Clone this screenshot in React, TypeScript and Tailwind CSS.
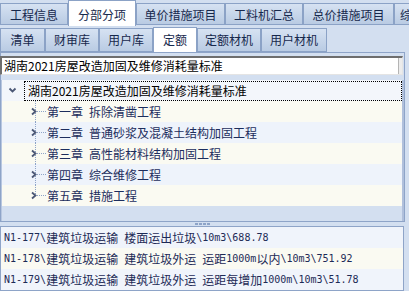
import React from "react";

const FONT = "font-['Noto_Sans_CJK_SC',sans-serif]";

function Mixed({ text }: { text: string }) {
  const parts = text.match(/[\x00-\x7f]+|[^\x00-\x7f]+/g) || [];
  return (
    <>
      {parts.map((p, i) =>
        /^[\x00-\x7f]+$/.test(p) ? (
          <span key={i} className="font-['DejaVu_Sans_Mono',monospace] text-[10px] whitespace-pre">
            {p}
          </span>
        ) : (
          <span key={i} className="text-[12px]">
            {p}
          </span>
        )
      )}
    </>
  );
}

function Tab({ label, w, active, h }: { label: string; w: string; active?: boolean; h: "top" | "sub" }) {
  if (h === "top") {
    return active ? (
      <div className={`${w} h-[26px] shrink-0 bg-white border border-b-0 border-[#8ba2c6] flex items-center justify-center pt-[2px] text-[12px] text-[#16284c]`}>
        {label}
      </div>
    ) : (
      <div className={`${w} mt-[3px] h-[22px] shrink-0 bg-gradient-to-b from-[#d6e2f2] to-[#b9cbe3] border border-[#8ba2c6] flex items-center justify-center pt-[1px] text-[12px] text-[#16284c] whitespace-nowrap overflow-hidden`}>
        {label}
      </div>
    );
  }
  return active ? (
    <div className={`${w} mt-[1px] h-[25px] shrink-0 bg-white border border-b-0 border-[#8ba2c6] flex items-center justify-center text-[12px] text-[#16284c]`}>
      {label}
    </div>
  ) : (
    <div className={`${w} mt-[2px] h-[24px] shrink-0 bg-gradient-to-b from-[#d6e2f2] to-[#b9cbe3] border border-[#8ba2c6] flex items-center justify-center text-[12px] text-[#16284c] whitespace-nowrap`}>
      {label}
    </div>
  );
}

function ChildRow({ num, label, alt, last }: { num: string; label: string; alt: boolean; last?: boolean }) {
  return (
    <div className={`h-[21px] flex items-center ${alt ? "bg-[#eef3fb]" : "bg-[#fafaf2]"}`}>
      <svg width="45" height="21" className="shrink-0">
        <line x1="33.5" y1="0" x2="33.5" y2={last ? 10 : 21} stroke="#8ea4c8" strokeDasharray="1 1" />
        <line x1="35" y1="10.5" x2="44" y2="10.5" stroke="#8ea4c8" strokeDasharray="1 1" />
        <path d="M30 7.5 L33.5 10.5 L30 13.5" stroke="#4b5775" strokeWidth="1.8" fill="none" />
      </svg>
      <span className="text-[12px] text-[#1c2d5d] whitespace-nowrap">{num}</span>
      <span className="ml-[6px] text-[12px] text-[#1c2d5d] whitespace-nowrap">{label}</span>
    </div>
  );
}

function ListRow({ text, alt }: { text: string; alt: boolean }) {
  return (
    <div className={`h-[21px] flex items-center pl-[3px] whitespace-nowrap text-[#1d2a56] ${alt ? "bg-[#fafaf2]" : "bg-[#f0f4fb]"}`}>
      <Mixed text={text} />
    </div>
  );
}

export default function App() {
  const chapters: [string, string][] = [
    ["第一章", "拆除清凿工程"],
    ["第二章", "普通砂浆及混凝土结构加固工程"],
    ["第三章", "高性能材料结构加固工程"],
    ["第四章", "综合维修工程"],
    ["第五章", "措施工程"],
  ];
  return (
    <div className={`w-[409px] h-[291px] overflow-hidden bg-[#d3dff0] ${FONT} flex flex-col`}>
      {/* top tabs */}
      <div className="h-[26px] flex items-start shrink-0 overflow-hidden">
        <Tab h="top" w="w-[68px]" label="工程信息" />
        <Tab h="top" w="w-[68px]" active label="分部分项" />
        <Tab h="top" w="w-[89px]" label="单价措施项目" />
        <Tab h="top" w="w-[78px]" label="工料机汇总" />
        <Tab h="top" w="w-[91px]" label="总价措施项目" />
        <div className="w-[70px] mt-[3px] h-[22px] shrink-0 bg-gradient-to-b from-[#d6e2f2] to-[#b9cbe3] border border-[#8ba2c6] flex items-center pl-[5px] pt-[1px] text-[12px] text-[#16284c] whitespace-nowrap overflow-hidden">
          综合
        </div>
      </div>
      {/* sub tabs */}
      <div className="h-[26px] flex items-start shrink-0">
        <Tab h="sub" w="w-[45px]" label="清单" />
        <Tab h="sub" w="w-[54px]" label="财审库" />
        <Tab h="sub" w="w-[54px]" label="用户库" />
        <Tab h="sub" w="w-[44px]" active label="定额" />
        <Tab h="sub" w="w-[64px]" label="定额材机" />
        <Tab h="sub" w="w-[66px]" label="用户材机" />
      </div>
      {/* main panel */}
      <div className="w-[405px] h-[170px] shrink-0 border border-[#8ea4c8] flex flex-col">
        <div className="h-[3px] shrink-0" />
        <div className="h-[19px] shrink-0 w-[403px] -ml-[1px] bg-white border-t-2 border-l-2 border-t-[#6e6e6e] border-l-[#6e6e6e] border-b border-r border-b-[#e4e4e4] border-r-[#e4e4e4] flex items-center">
          <span className="flex-1 pl-[2px] text-[12px] text-black whitespace-nowrap">湖南2021房屋改造加固及维修消耗量标准</span>
          <div className="w-[4px] h-full bg-[#ececec] border-l border-[#b4b4b4]" />
        </div>
        <div className="h-[5px] shrink-0" />
        <div className="flex-1 flex flex-col border-r-2 border-[#b0c0dc] border-l border-l-[#b8c7e0]">
          <div className="h-[21px] flex items-center bg-[#f3f6fb]">
            <svg width="22" height="21" className="shrink-0">
              <path d="M7.5 8.5 L10.5 11.5 L13.5 8.5" stroke="#4b5775" strokeWidth="1.8" fill="none" />
            </svg>
            <div className="flex-1 h-[20px] border border-dotted border-black flex items-center pl-[3px] text-[12px] text-black whitespace-nowrap">
              湖南2021房屋改造加固及维修消耗量标准
            </div>
          </div>
          {chapters.map(([n, c], i) => (
            <ChildRow key={n} num={n} label={c} alt={i % 2 === 1} last={i === chapters.length - 1} />
          ))}
          <div className="flex-1 bg-[#d3dff0]" />
        </div>
      </div>
      {/* splitter */}
      <div className="h-[4px] shrink-0 flex items-start justify-center pr-[4px]">
        <div className="flex gap-[1px] mt-[1px]">
          <div className="w-[3px] h-[2px] bg-[#8ea4c8]" />
          <div className="w-[3px] h-[2px] bg-[#8ea4c8]" />
          <div className="w-[3px] h-[2px] bg-[#8ea4c8]" />
          <div className="w-[3px] h-[2px] bg-[#8ea4c8]" />
        </div>
      </div>
      {/* list */}
      <div className="w-[404px] flex-1 border border-[#8ea4c8] flex flex-col bg-[#f0f4fb]">
        <ListRow alt={false} text="N1-177\建筑垃圾运输 楼面运出垃圾\10m3\688.78" />
        <ListRow alt={true} text="N1-178\建筑垃圾运输 建筑垃圾外运 运距1000m以内\10m3\751.92" />
        <ListRow alt={false} text="N1-179\建筑垃圾运输 建筑垃圾外运 运距每增加1000m\10m3\51.78" />
      </div>
    </div>
  );
}
